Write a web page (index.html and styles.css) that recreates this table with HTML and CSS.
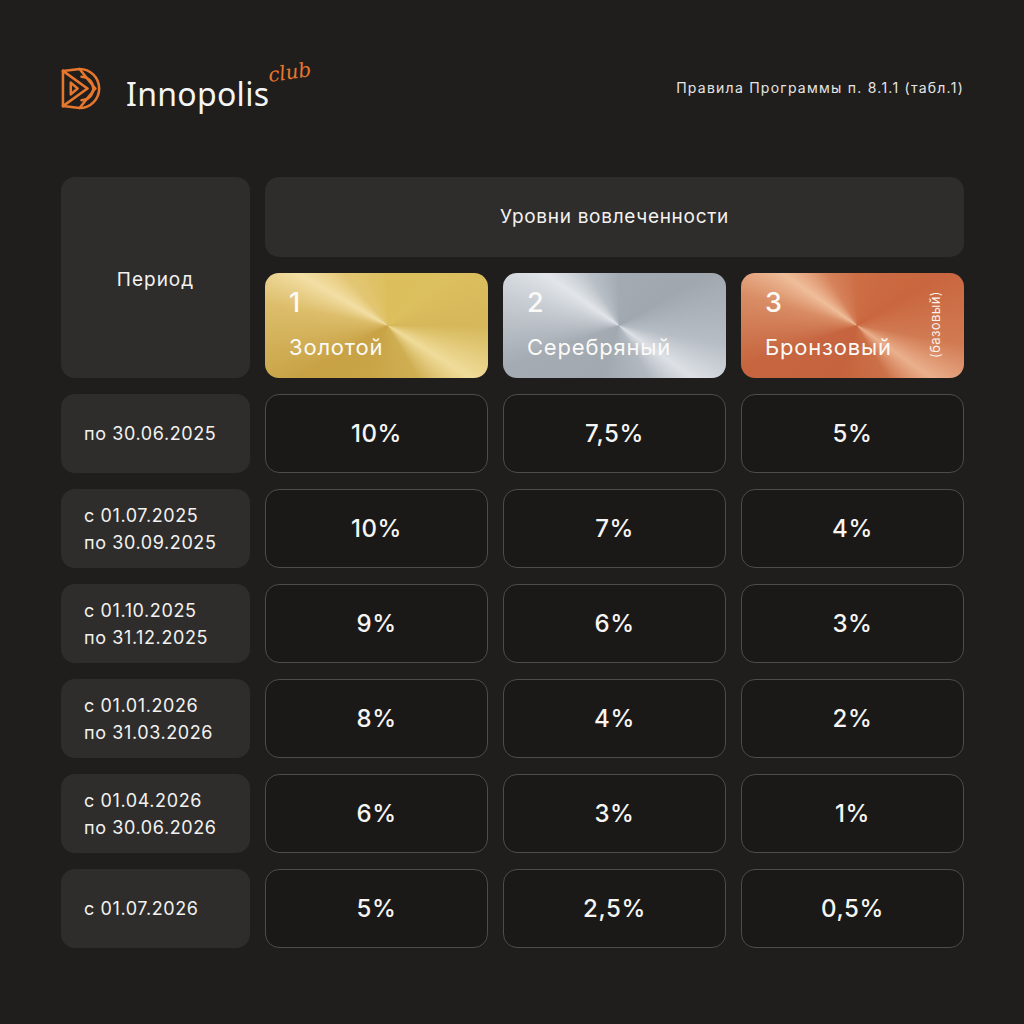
FILE: index.html
```html
<!DOCTYPE html>
<html lang="ru">
<head>
<meta charset="utf-8">
<link rel="stylesheet" href="styles.css">
</head>
<body>
<div class="page">
  <header class="top">
    <div class="logo">
      <svg class="logo-icon" viewBox="0 0 48 46" width="47" height="45" fill="none" stroke="#e8772e" stroke-width="2.6" stroke-linejoin="round" stroke-linecap="round">
        <path d="M20 3 A20 20 0 1 1 20 43"/>
        <path d="M22 11 A12 12 0 1 1 22 35"/>
        <path d="M3 5 L20 3 L36 23"/>
        <path d="M3 5 L28 23"/>
        <path d="M3 41 L20 43 L36 23"/>
        <path d="M3 41 L28 23"/>
        <path d="M3 5 L3 41"/>
        <path d="M11 17 L18 23 L11 29 Z"/>
      </svg>
      <span class="logo-word">Innopolis</span>
      <span class="logo-club">club</span>
    </div>
    <div class="rules">Правила Программы п. 8.1.1 (табл.1)</div>
  </header>

  <main class="table">
    <div class="cell period-head">Период</div>
    <div class="cell levels-head">Уровни вовлеченности</div>
    <div class="tier gold"><span class="tier-num">1</span><span class="tier-name">Золотой</span></div>
    <div class="tier silver"><span class="tier-num">2</span><span class="tier-name">Серебряный</span></div>
    <div class="tier bronze"><span class="tier-num">3</span><span class="tier-name">Бронзовый</span><span class="tier-note">(базовый)</span></div>

    <div class="cell date">по 30.06.2025</div>
    <div class="val">10%</div><div class="val">7,5%</div><div class="val">5%</div>

    <div class="cell date">с 01.07.2025<br>по 30.09.2025</div>
    <div class="val">10%</div><div class="val">7%</div><div class="val">4%</div>

    <div class="cell date">с 01.10.2025<br>по 31.12.2025</div>
    <div class="val">9%</div><div class="val">6%</div><div class="val">3%</div>

    <div class="cell date">с 01.01.2026<br>по 31.03.2026</div>
    <div class="val">8%</div><div class="val">4%</div><div class="val">2%</div>

    <div class="cell date">с 01.04.2026<br>по 30.06.2026</div>
    <div class="val">6%</div><div class="val">3%</div><div class="val">1%</div>

    <div class="cell date">с 01.07.2026</div>
    <div class="val">5%</div><div class="val">2,5%</div><div class="val">0,5%</div>
  </main>
</div>
</body>
</html>
```

FILE: styles.css
```css
* { box-sizing: border-box; }
html, body { margin: 0; padding: 0; }
body {
  background: #1f1e1d;
  color: #f3f2f0;
  font-family: Inter, "Noto Sans", sans-serif;
  width: 1024px;
  height: 1024px;
  overflow: hidden;
}
.page {
  padding: 62px 60px 0 60px;
}
.top {
  display: flex;
  justify-content: space-between;
  align-items: center;
  height: 50px;
}
.logo {
  display: flex;
  align-items: center;
  position: relative;
}
.logo-icon { display: block; margin-right: 19px; margin-top: 2px; }
.logo-word {
  font-family: "Noto Sans", Inter, sans-serif;
  font-size: 32px;
  font-weight: 400;
  letter-spacing: 0.3px;
  color: #f4f4f4;
  margin-top: 12px;
}
.logo-club {
  position: absolute;
  left: 208px;
  top: 0px;
  font-family: "DejaVu Serif", serif;
  font-style: italic;
  font-size: 20px;
  font-weight: 500;
  color: #e8772e;
  transform: rotate(-8deg);
}
.rules {
  font-size: 14px;
  color: #e6e5e3;
  letter-spacing: 1.25px;
  padding-right: 0;
}

.table {
  margin-top: 65px;
  display: grid;
  grid-template-columns: 189px 1fr 1fr 1fr;
  grid-template-rows: 80px 105px repeat(6, 79px);
  column-gap: 15px;
  row-gap: 16px;
  padding-left: 1px;
}
.cell {
  background: #2e2d2c;
  border-radius: 14px;
  display: flex;
  align-items: center;
  font-size: 18px;
  line-height: 27px;
  letter-spacing: 0.6px;
  color: #f3f2f0;
}
.period-head {
  grid-row: 1 / 3;
  justify-content: center;
  font-size: 19px;
  letter-spacing: 1px;
  padding-top: 3px;
}
.levels-head {
  grid-column: 2 / 5;
  justify-content: center;
  font-size: 19px;
  letter-spacing: 0.7px;
  padding-bottom: 2px;
}
.date {
  padding-left: 23px;
}
.val {
  border: 1px solid #4d4c4a;
  border-radius: 14px;
  background: #1a1918;
  display: flex;
  align-items: center;
  justify-content: center;
  font-size: 24px;
  font-weight: 500;
  letter-spacing: 0.6px;
  color: #f6f5f3;
}
.tier {
  position: relative;
  border-radius: 14px;
  display: flex;
  flex-direction: column;
  padding: 13px 24px 0 24px;
  color: #fbfaf7;
  overflow: hidden;
}
.tier-num {
  font-size: 27px;
  font-weight: 500;
  line-height: 34px;
}
.tier-name {
  font-size: 22px;
  line-height: 28px;
  letter-spacing: 0.8px;
  margin-top: 13px;
}
.tier-note {
  position: absolute;
  right: 21px;
  top: 18px;
  writing-mode: vertical-rl;
  transform: rotate(180deg);
  font-size: 13px;
  line-height: 15px;
  letter-spacing: 0.4px;
  color: #fbf1ea;
}
.gold {
  background: conic-gradient(from 0deg at 55% 50%,
    #dcbf5c 0deg, #dcbf5e 50deg, #d6b85a 90deg, #f0dc9a 122deg, #cfae52 150deg,
    #c9a547 200deg, #c8a245 240deg, #dcbd6a 280deg, #f3dfa5 300deg, #e3c673 320deg, #dcbf5c 360deg);
}
.silver {
  background: conic-gradient(from 0deg at 52% 50%,
    #a4aab2 0deg, #a0a7af 60deg, #b7bdc4 100deg, #dde1e6 125deg, #b2b8bf 150deg,
    #a2a8b0 200deg, #a5abb3 250deg, #c9ced4 285deg, #e2e6ea 305deg, #b9bfc6 330deg, #a4aab2 360deg);
}
.bronze {
  background: conic-gradient(from 0deg at 52% 50%,
    #cd6e45 0deg, #c9663f 60deg, #d17a52 100deg, #eab08c 125deg, #cc7048 150deg,
    #c4633d 200deg, #c6653f 250deg, #d98d65 285deg, #efbe9a 305deg, #d6825a 330deg, #cd6e45 360deg);
}
```
